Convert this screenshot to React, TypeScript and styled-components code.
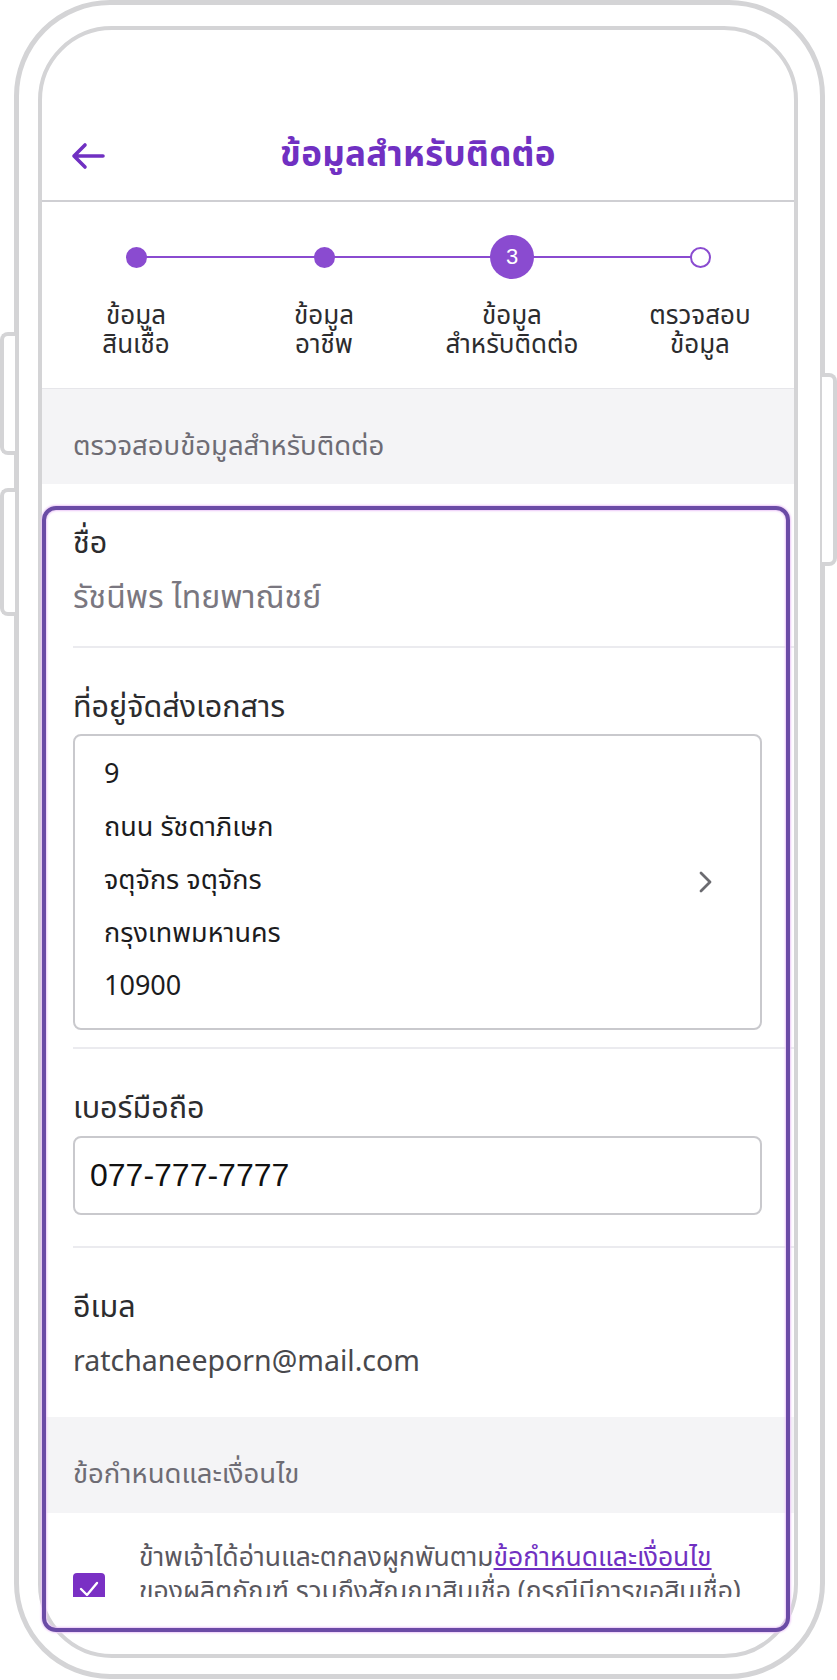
import React from 'react';
import styled, { createGlobalStyle } from 'styled-components';

const GlobalStyle = createGlobalStyle`
	html, body {
		margin: 0;
		padding: 0;
		background: #ffffff;
	}
	body {
		font-family: 'Noto Sans Thai', 'Noto Sans', 'Liberation Sans', sans-serif;
		color: #2c2c2e;
	}
	* {
		box-sizing: border-box;
	}
`;

const steps = [
	{ label: ['ข้อมูล', 'สินเชื่อ'], state: 'done' },
	{ label: ['ข้อมูล', 'อาชีพ'], state: 'done' },
	{ label: ['ข้อมูล', 'สำหรับติดต่อ'], state: 'current' },
	{ label: ['ตรวจสอบ', 'ข้อมูล'], state: 'todo' },
] as const;

const address = ['9', 'ถนน รัชดาภิเษก', 'จตุจักร จตุจักร', 'กรุงเทพมหานคร', '10900'];

const App = () => {
	return (
		<>
			<GlobalStyle />
			<Page>
				<Phone>
					<SideButton $side="left" $top={327} $height={123} />
					<SideButton $side="left" $top={483} $height={128} />
					<SideButton $side="right" $top={368} $height={193} />
					<Screen>
						<Viewport>
							<StatusSpace />
							<Header>
								<BackButton>
									<svg width="34" height="28" viewBox="0 0 34 28" fill="none">
										<path
											d="M32 14H3M14 3L3 14l11 11"
											stroke="currentColor"
											strokeWidth="3.6"
											strokeLinecap="round"
											strokeLinejoin="round"
										/>
									</svg>
								</BackButton>
								<Title>ข้อมูลสำหรับติดต่อ</Title>
							</Header>

							<Stepper>
								{steps.map((s, i) => (
									<Step key={i}>
										<Track $first={i === 0} $last={i === steps.length - 1}>
											<Dot $state={s.state}>{s.state === 'current' ? i + 1 : null}</Dot>
										</Track>
										<StepLabel>
											<span>{s.label[0]}</span>
											<span>{s.label[1]}</span>
										</StepLabel>
									</Step>
								))}
							</Stepper>

							<SectionTitle $border>ตรวจสอบข้อมูลสำหรับติดต่อ</SectionTitle>

							<Field $gapBelow={30} $divider>
								<FieldLabel>ชื่อ</FieldLabel>
								<NameValue>รัชนีพร ไทยพาณิชย์</NameValue>
							</Field>

							<Field $gapBelow={17} $divider>
								<FieldLabel>ที่อยู่จัดส่งเอกสาร</FieldLabel>
								<AddressBox>
									<AddressLines>
										{address.map((line) => (
											<div key={line}>{line}</div>
										))}
									</AddressLines>
									<Chevron viewBox="0 0 18 24" fill="none">
										<path
											d="M4 3l9 9-9 9"
											stroke="currentColor"
											strokeWidth="2.8"
											strokeLinecap="round"
											strokeLinejoin="round"
										/>
									</Chevron>
								</AddressBox>
							</Field>

							<Field $gapBelow={31} $divider>
								<FieldLabel>เบอร์มือถือ</FieldLabel>
								<InputBox>077-777-7777</InputBox>
							</Field>

							<Field $gapBelow={36}>
								<FieldLabel>อีเมล</FieldLabel>
								<EmailValue>ratchaneeporn@mail.com</EmailValue>
							</Field>

							<SectionTitle>ข้อกำหนดและเงื่อนไข</SectionTitle>

							<ConsentRow>
								<Checkbox>
									<svg width="20" height="16" viewBox="0 0 20 16" fill="none">
										<path
											d="M2 8l6 6L18 2"
											stroke="#ffffff"
											strokeWidth="2.4"
											strokeLinecap="round"
											strokeLinejoin="round"
										/>
									</svg>
								</Checkbox>
								<ConsentText>
									<span>
										ข้าพเจ้าได้อ่านและตกลงผูกพันตาม<TermsLink>ข้อกำหนดและเงื่อนไข</TermsLink>
									</span>
									<span>ของผลิตภัณฑ์ รวมถึงสัญญาสินเชื่อ (กรณีมีการขอสินเชื่อ)</span>
									<span>และยินยอมให้ธนาคารเก็บรวบรวมข้อมูล</span>
								</ConsentText>
							</ConsentRow>
						</Viewport>
					</Screen>
					<Highlight />
				</Phone>
			</Page>
		</>
	);
};

export default App;

const Page = styled.div`
	width: 837px;
	height: 1680px;
	overflow: hidden;
	padding-left: 14px;
`;

// phone body
const Phone = styled.div`
	position: relative;
	width: 811px;
	height: 1679px;
	border: 5px solid #d4d4d6;
	border-radius: 96px;
	padding: 21px 0 0 19px;
`;

const SideButton = styled.div<{ $side: 'left' | 'right'; $top: number; $height: number }>`
	position: absolute;
	top: ${(p) => p.$top}px;
	height: ${(p) => p.$height}px;
	width: 15px;
	${(p) => (p.$side === 'left' ? 'left: -19px;' : 'right: -17px;')}
	border: 4px solid #d4d4d6;
	${(p) =>
		p.$side === 'left'
			? 'border-right: none; border-radius: 8px 0 0 8px;'
			: 'border-left: none; border-radius: 0 8px 8px 0;'}
	background: #ffffff;
`;

const Screen = styled.div`
	width: 760px;
	height: 1632px;
	border: 4px solid #d4d4d6;
	border-radius: 74px;
	overflow: hidden;
	background: #ffffff;
`;

const Viewport = styled.div`
	height: 1567px;
	overflow: hidden;
	display: flex;
	flex-direction: column;
`;

const StatusSpace = styled.div`
	height: 82px;
	flex-shrink: 0;
`;

// header
const Header = styled.div`
	position: relative;
	flex-shrink: 0;
	height: 90px;
	border-bottom: 2px solid #cfcfd3;
	display: flex;
	align-items: center;
	justify-content: center;
`;

const BackButton = styled.div`
	position: absolute;
	left: 29px;
	top: 30px;
	color: #7030c2;
	display: flex;
`;

const Title = styled.h1`
	margin: 0;
	font-size: 35px;
	font-weight: 700;
	color: #7030c2;
	line-height: 44px;
	letter-spacing: 0.3px;
`;

// stepper
const Stepper = styled.div`
	flex-shrink: 0;
	height: 186px;
	display: grid;
	grid-template-columns: repeat(4, 1fr);
	padding-top: 33px;
`;

const Step = styled.div`
	display: flex;
	flex-direction: column;
	align-items: center;
`;

const Track = styled.div<{ $first: boolean; $last: boolean }>`
	position: relative;
	width: 100%;
	height: 44px;
	display: flex;
	align-items: center;
	justify-content: center;
	&::before,
	&::after {
		content: '';
		position: absolute;
		top: 21px;
		height: 2px;
		width: 50%;
		background: #8a4bd0;
	}
	&::before {
		left: 0;
		display: ${(p) => (p.$first ? 'none' : 'block')};
	}
	&::after {
		right: 0;
		display: ${(p) => (p.$last ? 'none' : 'block')};
	}
`;

const Dot = styled.div<{ $state: 'done' | 'current' | 'todo' }>`
	position: relative;
	z-index: 1;
	border-radius: 50%;
	display: flex;
	align-items: center;
	justify-content: center;
	color: #ffffff;
	font-family: 'Liberation Sans', sans-serif;
	font-size: 22px;
	width: ${(p) => (p.$state === 'current' ? 44 : 21)}px;
	height: ${(p) => (p.$state === 'current' ? 44 : 21)}px;
	background: ${(p) => (p.$state === 'todo' ? '#ffffff' : '#8a4bd0')};
	border: ${(p) => (p.$state === 'todo' ? '2px solid #8a4bd0' : 'none')};
`;

const StepLabel = styled.div`
	margin-top: 23px;
	display: flex;
	flex-direction: column;
	align-items: center;
	font-size: 26px;
	line-height: 29px;
	color: #2c2c2e;
	white-space: nowrap;
`;

// grey section heading
const SectionTitle = styled.div<{ $border?: boolean }>`
	flex-shrink: 0;
	background: #f4f4f6;
	border-top: ${(p) => (p.$border ? '1px solid #e6e6ea' : 'none')};
	height: 96px;
	padding: 42px 0 0 31px;
	font-size: 27.5px;
	line-height: 32px;
	color: #6e6c74;
`;

// form rows
const Field = styled.div<{ $divider?: boolean; $gapBelow: number }>`
	flex-shrink: 0;
	margin-left: 31px;
	padding: 42px 32px 0 0;
	padding-bottom: ${(p) => p.$gapBelow}px;
	border-bottom: ${(p) => (p.$divider ? '2px solid #ebebef' : 'none')};
`;

const FieldLabel = styled.div`
	font-size: 30.5px;
	line-height: 36px;
	color: #2c2c2e;
`;

const NameValue = styled.div`
	margin-top: 18px;
	font-size: 32px;
	line-height: 36px;
	color: #7a7780;
`;

const AddressBox = styled.div`
	margin-top: 8px;
	height: 296px;
	border: 2px solid #c9c9cd;
	border-radius: 8px;
	display: flex;
	align-items: center;
	justify-content: space-between;
	padding: 0 45px 0 29px;
`;

const AddressLines = styled.div`
	font-size: 27px;
	line-height: 53px;
	color: #1c1c1e;
	margin-top: -4px;
`;

const Chevron = styled.svg`
	width: 18px;
	height: 24px;
	color: #6b6b70;
`;

const InputBox = styled.div`
	margin-top: 9px;
	height: 79px;
	border: 2px solid #c9c9cd;
	border-radius: 8px;
	display: flex;
	align-items: center;
	padding-left: 15px;
	font-family: 'Liberation Sans', sans-serif;
	font-size: 32px;
	color: #111111;
`;

const EmailValue = styled.div`
	margin-top: 19px;
	font-size: 28.5px;
	line-height: 36px;
	color: #48484c;
`;

// consent
const ConsentRow = styled.div`
	flex-shrink: 0;
	display: flex;
	align-items: flex-start;
	gap: 34px;
	padding: 28px 32px 0 31px;
`;

const Checkbox = styled.div`
	flex-shrink: 0;
	margin-top: 32px;
	width: 32px;
	height: 32px;
	border-radius: 4px;
	background: #7a30c4;
	display: flex;
	align-items: center;
	justify-content: center;
`;

const ConsentText = styled.div`
	display: flex;
	flex-direction: column;
	font-size: 26.5px;
	line-height: 34px;
	color: #5a5860;
	white-space: nowrap;
`;

const TermsLink = styled.span`
	color: #7030c2;
	text-decoration: underline;
`;

// purple highlight frame drawn over the form
const Highlight = styled.div`
	position: absolute;
	left: 23px;
	top: 501px;
	width: 748px;
	height: 1126px;
	border: 4px solid #6b4ba6;
	border-radius: 14px;
	box-shadow: 0 0 2px 1px #edc8f8, inset 0 0 2px 1px #edc8f8;
	pointer-events: none;
`;
